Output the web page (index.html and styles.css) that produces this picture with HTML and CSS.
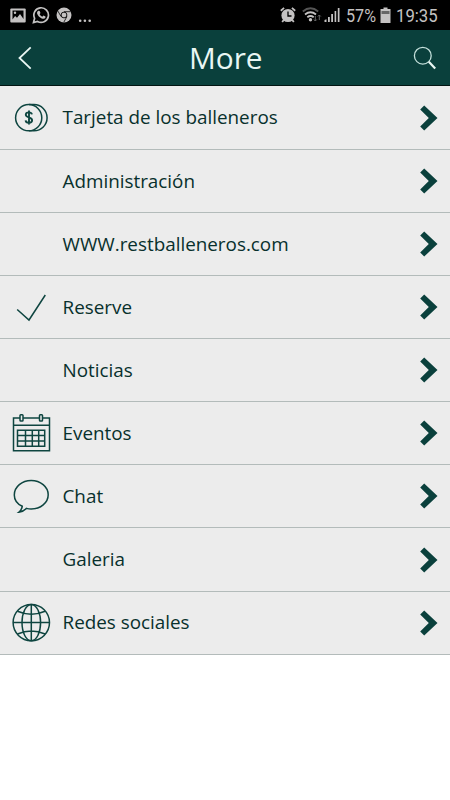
FILE: index.html
```
<!DOCTYPE html>
<html lang="es">
<head>
  <meta charset="UTF-8">
  <meta name="viewport" content="width=device-width, initial-scale=1.0">
  <title>More</title>
  <link rel="stylesheet" href="styles.css">
</head>
<body>
  <div class="status-bar">
    <div class="status-left">
      <svg width="16" height="15" viewBox="0 0 16 15">
        <rect x="0.300" y="0.500" width="15.400" height="14" rx="1" fill="#c4c2c2"/>
        <path fill="#000" d="M2.500 2.500h11v8.500l-3.500-5-3 3.700-1.900-1.700-2.600 3.500z"/>
        <circle cx="5" cy="4.800" r="1.200" fill="#c4c2c2"/>
      </svg>
      <svg width="18" height="18" viewBox="0 0 18 18">
        <path fill="none" stroke="#c4c2c2" stroke-width="1.700" d="M1.500 16.500l1.100-4.200a7.300 7.300 0 1 1 2.900 3.100z"/>
        <path fill="#c4c2c2" d="M6.300 4.800l1.300 0.100 0.900 2.100-0.900 1.200c0.600 1.200 1.500 2 2.700 2.500l1.100-1.100 2.100 1-0.100 1.200c-0.700 1.200-2.200 1.300-3.700 0.600-2.100-0.900-3.900-2.700-4.600-4.900-0.300-1.100 0.300-2.200 1.200-2.700z"/>
      </svg>
      <svg width="16" height="16" viewBox="0 0 16 16">
        <circle cx="8" cy="8" r="7.500" fill="#c4c2c2"/>
        <circle cx="8" cy="8" r="2.900" fill="#c4c2c2" stroke="#000" stroke-width="0.900"/>
        <path fill="none" stroke="#000" stroke-width="0.800" d="M8 4.700h6.500M5.100 9.600L1.900 4.100M10.900 9.600L7.800 15.200"/>
      </svg>
      <svg width="14" height="15" viewBox="0 0 14 15">
        <circle cx="2.200" cy="12.800" r="1.300" fill="#c4c2c2"/>
        <circle cx="6.900" cy="12.800" r="1.300" fill="#c4c2c2"/>
        <circle cx="11.700" cy="12.800" r="1.300" fill="#c4c2c2"/>
      </svg>
    </div>
    <div class="status-right">
      <svg width="16" height="16" viewBox="0 0 16 16">
        <circle cx="8" cy="8.500" r="6.600" fill="#c4c2c2"/>
        <path fill="none" stroke="#c4c2c2" stroke-width="1.800" d="M0.800 3.700L4.100 0.900M11.900 0.900l3.300 2.800M3.700 13l-1.500 2M12.300 13l1.500 2"/>
        <path fill="none" stroke="#000" stroke-width="1.300" d="M8 4.500v4.500h3.500"/>
      </svg>
      <svg class="wifi" width="20" height="16" viewBox="0 0 20 16">
        <path fill="none" stroke="#555" stroke-width="1.800" d="M0.800 4.500q7.700-6.500 15.400 0"/>
        <path fill="none" stroke="#c4c2c2" stroke-width="1.800" d="M3 7.500q5.500-4.500 11 0M5.300 10.200q3.200-2.500 6.400 0"/>
        <circle cx="8.500" cy="12.700" r="1.700" fill="#c4c2c2"/>
        <path fill="none" stroke="#666" stroke-width="1" d="M13.300 9v5M11.800 12.500l1.500 1.500 1.500-1.500M17.300 13v-5M15.800 9.500l1.500-1.500 1.500 1.500"/>
      </svg>
      <svg class="signal" width="16" height="16" viewBox="0 0 16 16">
        <path fill="#c4c2c2" d="M0.500 15v-2l2-0.800v2.800zM4 15v-5h1.800v5zM7.200 15v-8h1.800v8zM10.600 15v-11h1.600v11zM13.800 15v-14h1.700v14z"/>
      </svg>
      <span class="percent">57%</span>
      <svg class="battery" width="11" height="17" viewBox="0 0 11 17">
        <path fill="#c4c2c2" d="M3.500 0.500h4v1.500h3v14h-10v-14h3z"/>
        <path fill="#666" d="M1.500 4h8v3h-8z"/>
      </svg>
      <span class="clock">19:35</span>
    </div>
  </div>

  <header class="header">
    <svg class="back" width="14" height="24" viewBox="0 0 14 24">
      <path d="M12.700 1.300L1.500 12l11.200 10.700"/>
    </svg>
    <h1>More</h1>
    <svg class="search" width="24" height="24" viewBox="0 0 24 24">
      <circle cx="9.800" cy="9.700" r="8.400"/>
      <path d="M15.800 15.800l6.400 6.700"/>
    </svg>
  </header>

  <ul class="menu">
    <li>
      <svg class="icon" viewBox="0 0 40 40">
        <circle cx="17.700" cy="19.700" r="13.100"/>
        <path d="M18 6.600h5a13.100 13.100 0 0 1 0 26.200h-5"/>
        <path class="dollar" d="M20.900 16.400c-0.300-1.400-1.500-2-3-2-1.800 0-3.100 0.900-3.100 2.400 0 3.300 6.300 1.900 6.300 5.400 0 1.600-1.400 2.500-3.200 2.500s-3.100-0.800-3.300-2.400M18 12.600v14"/>
      </svg>
      <span class="label">Tarjeta de los balleneros</span>
      <svg class="arrow" viewBox="0 0 18 26"><path d="M4.200 0.500L17.500 13 4.200 25.500 0.200 21.500 8.800 13 0.200 4.500z"/></svg>
    </li>
    <li>
      <span class="icon"></span>
      <span class="label">Administración</span>
      <svg class="arrow" viewBox="0 0 18 26"><path d="M4.200 0.500L17.500 13 4.200 25.500 0.200 21.500 8.800 13 0.200 4.500z"/></svg>
    </li>
    <li>
      <span class="icon"></span>
      <span class="label">WWW.restballeneros.com</span>
      <svg class="arrow" viewBox="0 0 18 26"><path d="M4.200 0.500L17.500 13 4.200 25.500 0.200 21.500 8.800 13 0.200 4.500z"/></svg>
    </li>
    <li>
      <svg class="icon" viewBox="0 0 40 40">
        <path d="M6.200 22.500L18 33 34.300 8"/>
      </svg>
      <span class="label">Reserve</span>
      <svg class="arrow" viewBox="0 0 18 26"><path d="M4.200 0.500L17.500 13 4.200 25.500 0.200 21.500 8.800 13 0.200 4.500z"/></svg>
    </li>
    <li>
      <span class="icon"></span>
      <span class="label">Noticias</span>
      <svg class="arrow" viewBox="0 0 18 26"><path d="M4.200 0.500L17.500 13 4.200 25.500 0.200 21.500 8.800 13 0.200 4.500z"/></svg>
    </li>
    <li>
      <svg class="icon" viewBox="0 0 40 40">
        <path d="M9 4.900H2.500v32.900h36V4.900h-6.500M12 4.900h16.500M2.500 12.200h36"/>
        <rect x="9" y="1.800" width="3" height="6.200" rx="0.800"/>
        <rect x="28.500" y="1.800" width="3" height="6.200" rx="0.800"/>
        <path d="M6.500 17.300h27.200v16H6.500zM14.500 17.300v16M21.300 17.300v16M27.700 17.300v16M6.500 22.500h27.200M6.500 28h27.200"/>
      </svg>
      <span class="label">Eventos</span>
      <svg class="arrow" viewBox="0 0 18 26"><path d="M4.200 0.500L17.500 13 4.200 25.500 0.200 21.500 8.800 13 0.200 4.500z"/></svg>
    </li>
    <li>
      <svg class="icon" viewBox="0 0 40 40">
        <path d="M11.300 30.200C6 27.800 3.300 23.700 3.300 18.900 3.300 10.700 11 4.400 20.200 4.400s17 6.300 17 14.300-7.700 14.300-17 14.300c-1.600 0-3.200-0.200-4.700-0.600-2.300 2.200-4.600 3.600-7.700 3.800 2-1.700 3.200-3.700 3.500-6z"/>
      </svg>
      <span class="label">Chat</span>
      <svg class="arrow" viewBox="0 0 18 26"><path d="M4.200 0.500L17.500 13 4.200 25.500 0.200 21.500 8.800 13 0.200 4.500z"/></svg>
    </li>
    <li>
      <span class="icon"></span>
      <span class="label">Galeria</span>
      <svg class="arrow" viewBox="0 0 18 26"><path d="M4.200 0.500L17.500 13 4.200 25.500 0.200 21.500 8.800 13 0.200 4.500z"/></svg>
    </li>
    <li>
      <svg class="icon" viewBox="0 0 40 40">
        <circle cx="20.300" cy="19.600" r="18.200"/>
        <ellipse cx="20.300" cy="19.600" rx="9.300" ry="18.200"/>
        <path d="M20.300 1.400v36.400M2.100 19.600h36.400M6.500 8.200q13.800 6 27.600 0M6.500 31q13.800-6 27.600 0"/>
      </svg>
      <span class="label">Redes sociales</span>
      <svg class="arrow" viewBox="0 0 18 26"><path d="M4.200 0.500L17.500 13 4.200 25.500 0.200 21.500 8.800 13 0.200 4.500z"/></svg>
    </li>
  </ul>
</body>
</html>
```
FILE: styles.css
```
* {
  box-sizing: border-box;
}

body {
  margin: 0;
  min-height: 100vh;
  background: #fff;
  font-family: 'Open Sans', sans-serif;
}

.status-bar {
  display: flex;
  justify-content: space-between;
  height: 30px;
  padding: 0 12px 0 10px;
  background: #000;
  color: #c4c2c2;
  font-family: 'Roboto', sans-serif;
}

.status-left,
.status-right {
  display: flex;
  align-items: center;
}

.status-left {
  gap: 6px;
}

.wifi {
  margin-left: 6px;
}

.signal {
  margin-left: 2px;
}

.percent,
.clock {
  font-size: 19px;
  line-height: 31px;
  white-space: nowrap;
  transform-origin: left center;
}

.percent {
  width: 31px;
  margin-left: 6px;
  transform: scaleX(0.85);
}

.battery {
  margin-left: 3px;
}

.clock {
  width: 42px;
  margin-left: 5px;
  transform: scaleX(0.88);
}

.header {
  display: flex;
  align-items: center;
  justify-content: space-between;
  height: 56px;
  padding: 0 13px 0 18px;
  background: #0a403c;
  border-bottom: 1px solid #021512;
}

.header h1 {
  margin: 0 0 0 6px;
  font-size: 29.8px;
  font-weight: 400;
  line-height: 55px;
  color: #e9f6f3;
}

.back,
.search {
  fill: none;
  stroke: #e9f6f3;
  stroke-width: 1.8;
}

.search {
  margin-right: -0.5px;
}

.search circle {
  stroke: #c3dfda;
  stroke-width: 1.3;
}

.search path {
  stroke-width: 2.2;
}

.menu {
  margin: 0;
  padding: 0.6px 0 0;
  list-style: none;
  background: #ececec;
}

.menu li {
  display: flex;
  align-items: center;
  height: 63.13px;
  padding: 0 12px 0 11px;
  border-bottom: 1px solid #b3bbba;
}

.icon {
  width: 40px;
  height: 40px;
  margin-right: 11.5px;
  fill: none;
  stroke: #0e4540;
  stroke-width: 1.5;
}

.dollar {
  stroke-width: 1.9;
}

.label {
  flex: 1;
  padding-bottom: 0.5px;
  font-size: 18.85px;
  color: #08302c;
}

.arrow {
  width: 18px;
  height: 26px;
  fill: #0a403c;
}
```
